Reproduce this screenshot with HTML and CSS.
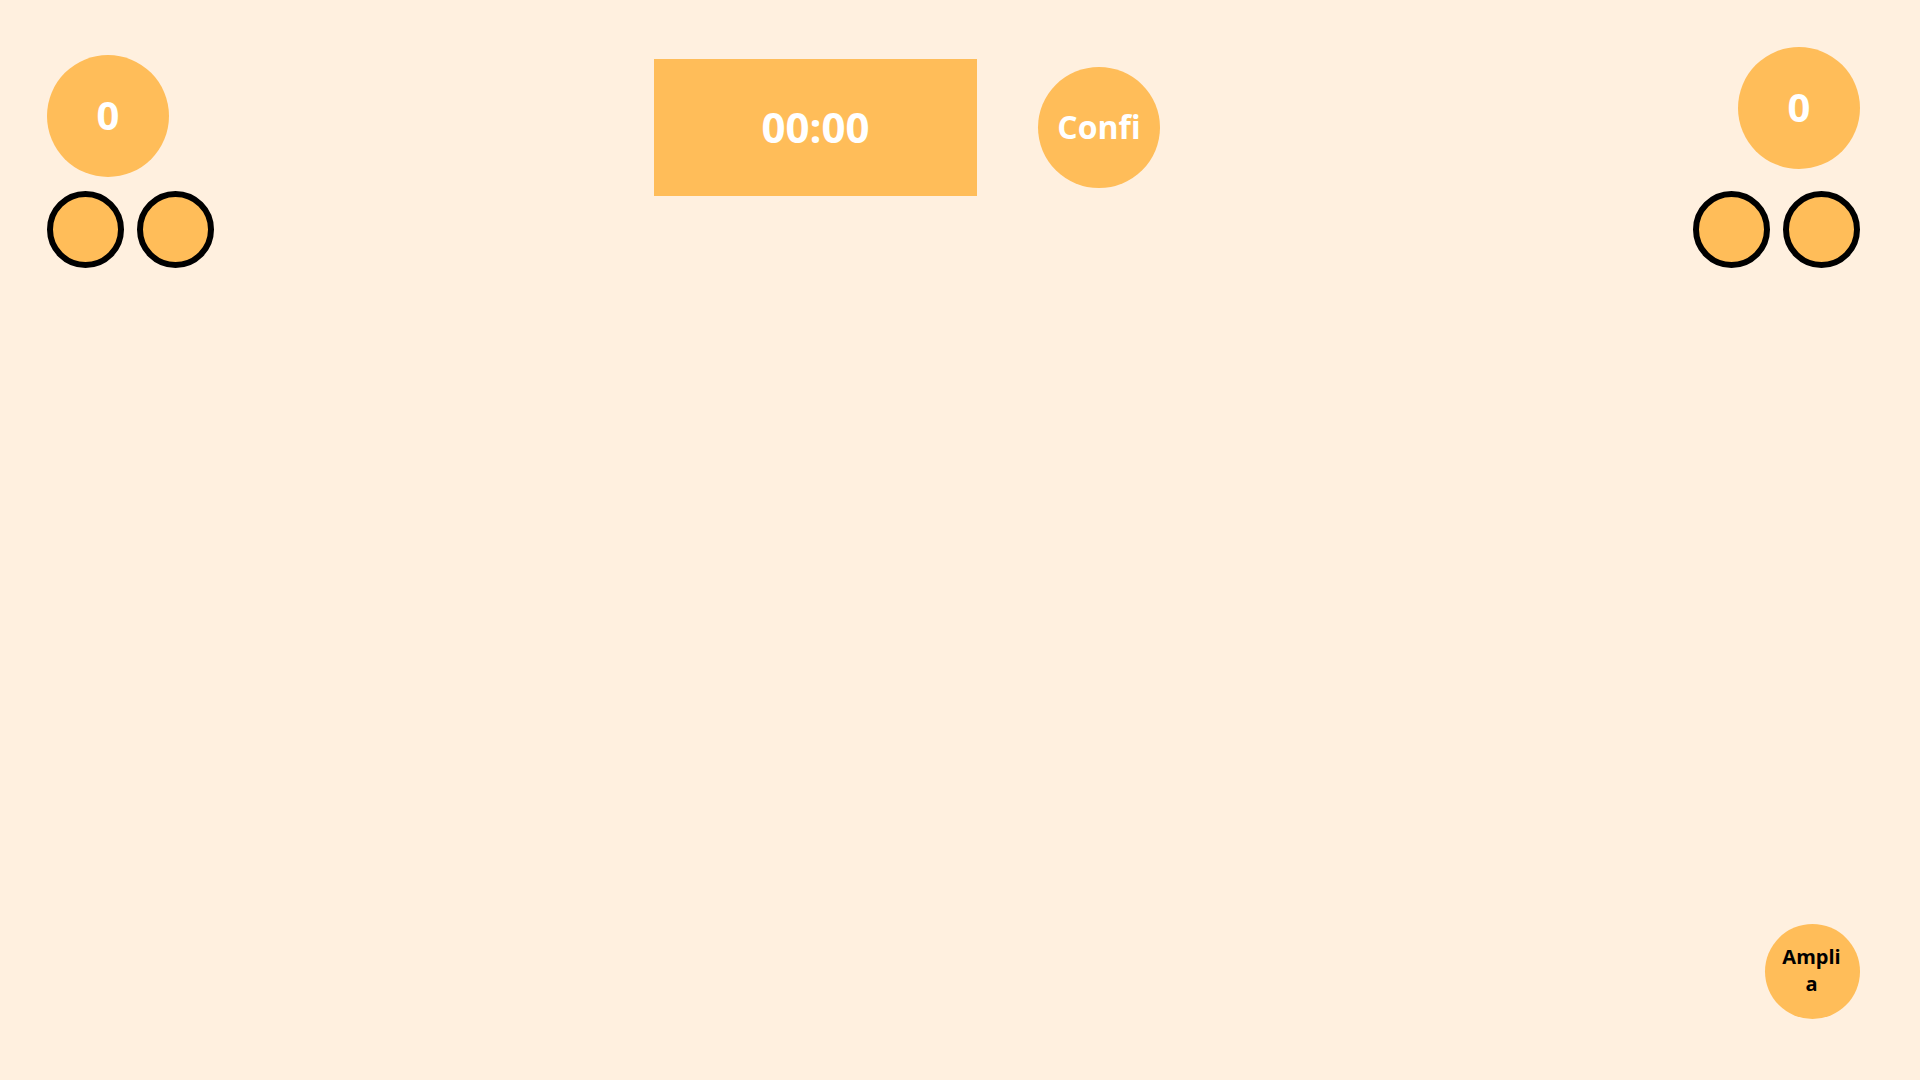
FILE: index.html
```html
<!DOCTYPE html>
<html lang="es">
<head>
<meta charset="utf-8">
<title>Marcador</title>
<link rel="stylesheet" href="styles.css">
</head>
<body>
<div class="screen">
  <header class="top">
    <div class="team team-left">
      <div class="score">0</div>
      <div class="fouls">
        <div class="foul"></div>
        <div class="foul"></div>
      </div>
    </div>
    <div class="timer">00:00</div>
    <div class="config">Confi</div>
    <div class="team team-right">
      <div class="score">0</div>
      <div class="fouls">
        <div class="foul"></div>
        <div class="foul"></div>
      </div>
    </div>
  </header>
  <footer class="bottom">
    <div class="expand">Amplia</div>
  </footer>
</div>
</body>
</html>
```
FILE: styles.css
```css
* { box-sizing: border-box; }
html, body {
  margin: 0;
  padding: 0;
  height: 100%;
}
body {
  background: #FFF0DF;
  font-family: "Open Sans", "Liberation Sans", sans-serif;
  font-weight: 700;
}
.screen {
  height: 100vh;
  display: flex;
  flex-direction: column;
  justify-content: space-between;
  padding: 0 60px 61px 47px;
}
.top {
  display: flex;
  align-items: flex-start;
}
.team {
  display: flex;
  flex-direction: column;
}
.team-left { margin-top: 55px; }
.team-left .fouls { margin-top: 14px; }
.team-right {
  margin-left: auto;
  margin-top: 47px;
  align-items: flex-end;
}
.team-right .fouls { margin-top: 22px; }
.score {
  width: 122px;
  height: 122px;
  border-radius: 50%;
  background: #FFBD59;
  color: #fff;
  font-size: 40px;
  display: flex;
  align-items: center;
  justify-content: center;
  padding-bottom: 3px;
}
.fouls {
  display: flex;
  gap: 13px;
}
.foul {
  width: 77px;
  height: 77px;
  border-radius: 50%;
  background: #FFBD59;
  border: 6px solid #000;
}
.timer {
  margin-left: 440px;
  margin-top: 59px;
  width: 323px;
  height: 137px;
  background: #FFBD59;
  color: #fff;
  font-size: 42px;
  display: flex;
  align-items: center;
  justify-content: center;
  padding-bottom: 3px;
}
.config {
  margin-left: 61px;
  margin-top: 67px;
  width: 122px;
  height: 121px;
  border-radius: 50%;
  background: #FFBD59;
  color: #fff;
  font-size: 32px;
  display: flex;
  align-items: center;
  justify-content: center;
  padding-bottom: 3px;
}
.bottom {
  display: flex;
  justify-content: flex-end;
}
.expand {
  width: 95px;
  height: 95px;
  border-radius: 50%;
  background: #FFBD59;
  color: #000;
  font-size: 20px;
  text-align: center;
  word-break: break-all;
  padding: 19px 17px 0 15px;
}
```
